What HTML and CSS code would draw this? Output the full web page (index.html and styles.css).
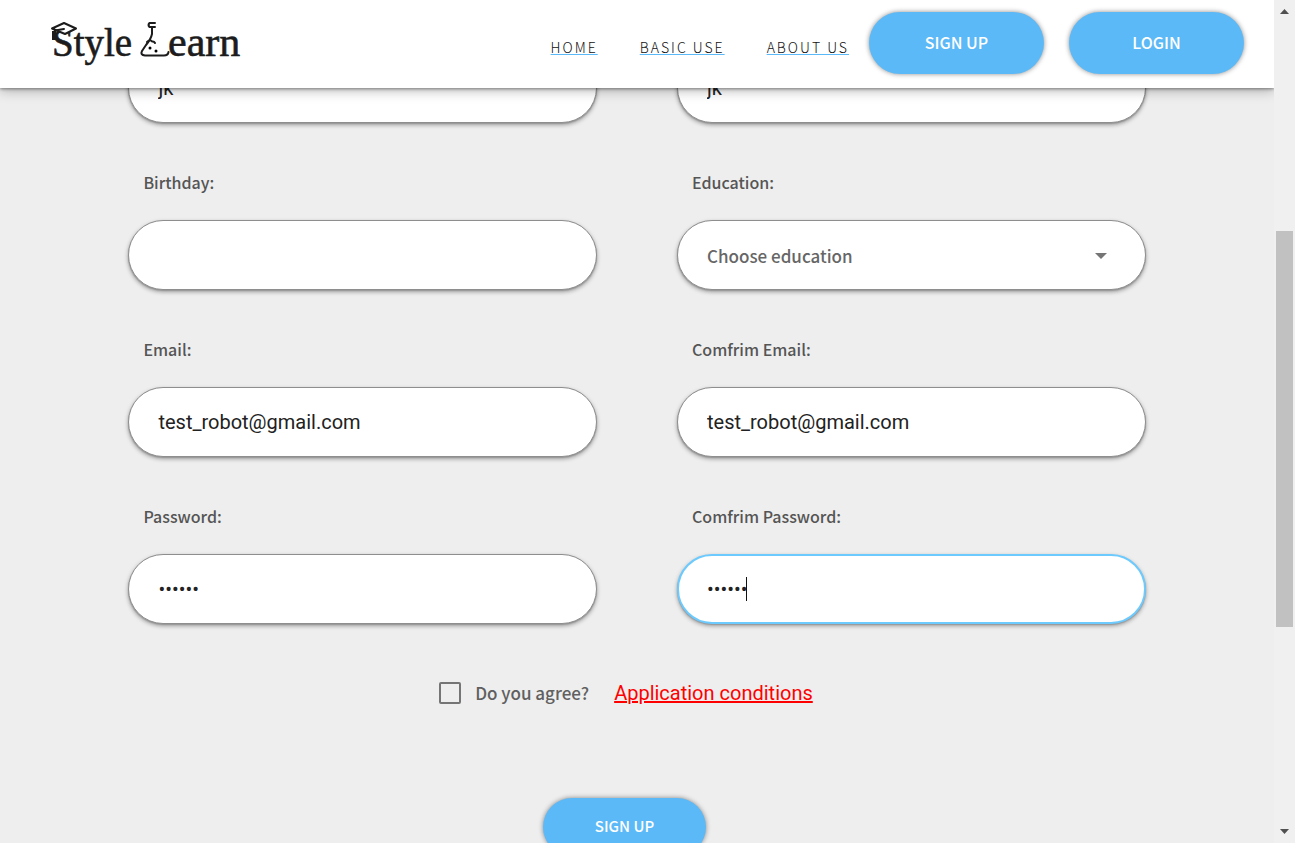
FILE: index.html
```html
<!DOCTYPE html>
<html lang="en">
<head>
<meta charset="utf-8">
<title>Style Learn</title>
<link rel="stylesheet" href="styles.css">
</head>
<body>
<div class="page">
  <div class="view">
    <header class="header">
      <a class="logo" href="#" aria-label="Style Learn">
        <svg width="192" height="48" viewBox="0 0 192 48">
          <g class="logo-text">
            <text x="2" y="37" font-size="39">Style</text>
            <text x="118" y="37" font-size="42">earn</text>
          </g>
          <g fill="none" stroke="#1c1c1c" stroke-width="2" stroke-linejoin="round" stroke-linecap="round">
            <path d="M2 9.500 L14 4 L26 9.500 L15 15 Z" fill="#fff"/>
            <path d="M14 10 L5 11.500 L4 16"/>
            <path d="M4 12 V21" stroke-width="4" stroke-linecap="butt"/>
            <path d="M105 4 H99.500 Q97.500 6 99.500 8 H105"/>
            <path d="M102 8 V15 Q101 20 96 26 L92 32 Q90 36 95 36.500 H114 Q118 36.500 118.500 33"/>
            <path d="M97 23 Q100 20 102 22.500 Q104 22 105 24"/>
          </g>
          <circle cx="100" cy="29" r="1.500"/><circle cx="106" cy="32" r="1.500"/>
        </svg>
      </a>
      <nav class="nav">
        <a href="#">HOME</a>
        <a href="#">BASIC USE</a>
        <a href="#">ABOUT US</a>
      </nav>
      <div class="actions">
        <button class="pill" type="button">SIGN UP</button>
        <button class="pill" type="button">LOGIN</button>
      </div>
    </header>
    <main class="main">
      <form class="form">
        <div class="fields">
          <div class="field"><input class="control" type="text" value="jk" aria-label="First name"></div>
          <div class="field"><input class="control" type="text" value="jk" aria-label="Last name"></div>
          <div class="field"><label for="birthday">Birthday:</label><input class="control" id="birthday" type="text"></div>
          <div class="field">
            <label for="education">Education:</label>
            <div class="wrap">
              <select class="control select" id="education"><option>Choose education</option></select>
              <svg class="arrow" width="12" height="6" viewBox="0 0 12 6"><path d="M0 0H12L6 6Z" fill="#757575"/></svg>
            </div>
          </div>
          <div class="field"><label for="email">Email:</label><input class="control" id="email" type="email" value="test_robot@gmail.com"></div>
          <div class="field"><label for="email2">Comfrim Email:</label><input class="control" id="email2" type="email" value="test_robot@gmail.com"></div>
          <div class="field"><label for="pass">Password:</label><input class="control" id="pass" type="password" value="123456"></div>
          <div class="field">
            <label for="pass2">Comfrim Password:</label>
            <div class="wrap">
              <input class="control active" id="pass2" type="password" value="123456">
              <span class="caret"></span>
            </div>
          </div>
        </div>
        <div class="agree">
          <input class="check" id="agree" type="checkbox">
          <label for="agree">Do you agree?</label>
          <a href="#">Application conditions</a>
        </div>
        <div class="submit"><button class="pill small" type="button">SIGN UP</button></div>
      </form>
    </main>
  </div>
  <div class="scrollbar">
    <svg class="step" width="9" height="5" viewBox="0 0 9 5"><path d="M0 5L4.500 0L9 5Z" fill="#505050"/></svg>
    <div class="before"></div>
    <div class="thumb"></div>
    <div class="after"></div>
    <svg class="step" width="9" height="5" viewBox="0 0 9 5"><path d="M0 0H9L4.500 5Z" fill="#505050"/></svg>
  </div>
</div>
</body>
</html>
```
FILE: styles.css
```css
* { box-sizing: border-box; }
body {
  margin: 0;
  background: #eee;
  font-family: "Noto Sans CJK SC", "Noto Sans", sans-serif;
}
.page {
  display: flex;
  height: 100vh;
  overflow: hidden;
}
.view {
  position: relative;
  flex: 1;
  overflow: hidden;
}
.header {
  position: absolute;
  top: 0;
  left: 0;
  right: 0;
  z-index: 2;
  display: flex;
  align-items: center;
  padding: 12px 30px 14px 50px;
  background: #fff;
  box-shadow: 0 1px 3px rgba(0, 0, 0, .4), 0 2px 12px rgba(0, 0, 0, .3);
}
.logo { display: block; }
.logo svg { display: block; }
.logo-text {
  font-family: "Liberation Serif", serif;
  fill: #1c1c1c;
  stroke: #1c1c1c;
  stroke-width: .6px;
}
.nav {
  display: flex;
  gap: 42px;
  margin-left: auto;
  padding-top: 8px;
}
.nav a {
  color: #111;
  font-size: 14px;
  font-weight: 300;
  line-height: 20px;
  letter-spacing: 2px;
  text-decoration: underline 1px #5cb9f7;
  text-underline-offset: 1px;
  text-decoration-skip-ink: none;
}
.actions {
  display: flex;
  gap: 25px;
  margin-left: 20px;
}
.pill {
  width: 175px;
  height: 62px;
  padding: 0 0 3px;
  border: 0;
  border-radius: 31px;
  background: #5cb9f7;
  color: #fff;
  font: 500 16px "Noto Sans CJK SC", sans-serif;
  box-shadow: 0 0 5px rgba(0, 0, 0, .45);
}
.pill.small {
  width: 163px;
  height: 58px;
  font-size: 15px;
}
.main { padding-top: 53px; }
.fields {
  display: grid;
  grid-template-columns: 1fr 1fr;
  gap: 47px 80px;
  width: calc(80% - 2px);
  margin: 0 auto;
}
.field label {
  display: block;
  margin-bottom: 26px;
  padding-left: 15px;
  color: #555;
  font-size: 16px;
  font-weight: 500;
  line-height: 24px;
}
.wrap { position: relative; }
.control {
  display: block;
  width: 100%;
  height: 70px;
  padding: 0 29px;
  border: 1px solid #8e8e8e;
  border-radius: 35px;
  outline: 0;
  background: #fff;
  color: #222;
  font: 20px Roboto, sans-serif;
  box-shadow: 0 1px 1px #999, 0 2px 4px rgba(0, 0, 0, .35);
}
.select {
  appearance: none;
  color: #666;
  font: 500 17px "Noto Sans CJK SC", sans-serif;
}
.arrow {
  position: absolute;
  top: 33px;
  right: 39px;
}
.control.active {
  padding: 0 28px;
  border: 2px solid #6ccaff;
}
.caret {
  position: absolute;
  top: 23px;
  left: 69px;
  width: 1px;
  height: 24px;
  background: #111;
}
.agree {
  display: flex;
  align-items: center;
  justify-content: center;
  margin-top: 57px;
  padding-right: 22px;
  font-size: 20px;
  line-height: 24px;
}
.check {
  appearance: none;
  width: 22px;
  height: 22px;
  margin: 0 14px 0 0;
  border: 2px solid #757575;
  border-radius: 2px;
}
.agree label {
  color: #606060;
  font-size: 17px;
  font-weight: 500;
}
.agree a {
  margin-left: 25px;
  color: #f00;
  font-family: Roboto, sans-serif;
}
.submit {
  display: flex;
  justify-content: center;
  margin-top: 93px;
  padding-right: 25px;
}
.scrollbar {
  display: flex;
  flex-direction: column;
  width: 21px;
  padding: 0 2px;
  background: #f0f0f0;
}
.step {
  flex: none;
  align-self: center;
  margin: 9px 0;
}
.before { flex: 208; }
.thumb {
  flex: 396;
  background: #c1c1c1;
}
.after { flex: 193; }
```
